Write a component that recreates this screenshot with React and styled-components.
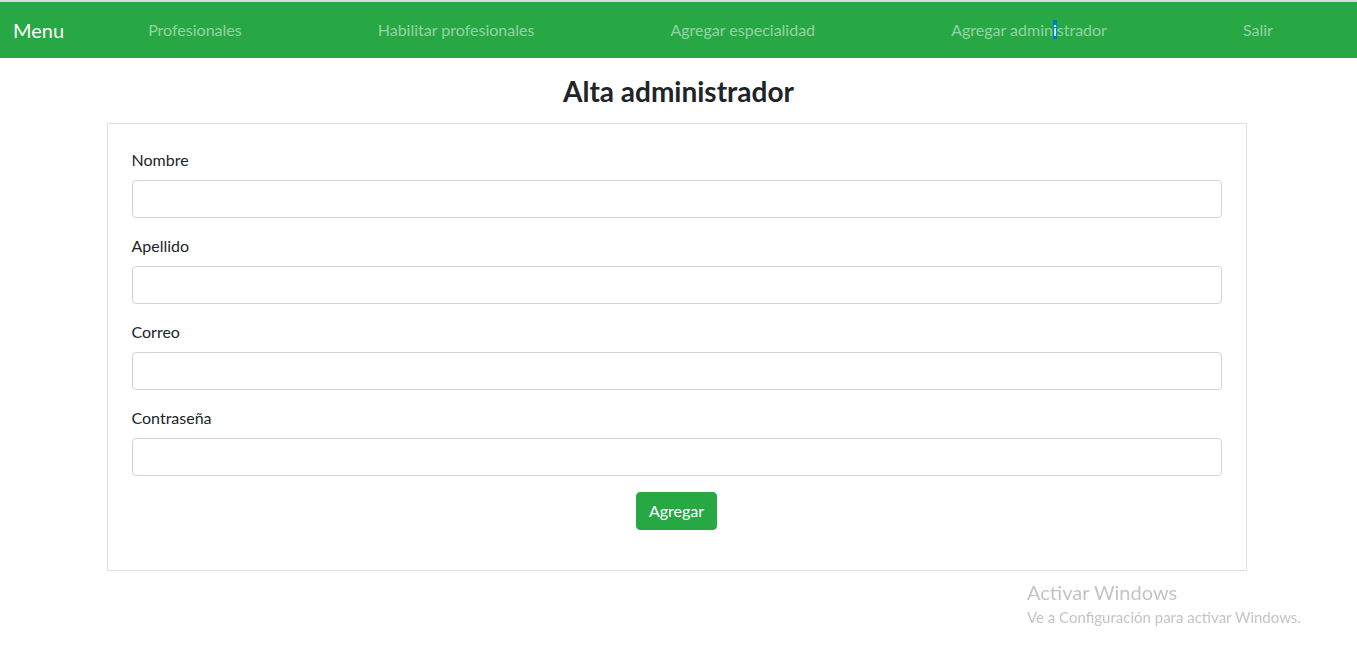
import React from 'react';
import styled, { createGlobalStyle } from 'styled-components';

const GlobalStyle = createGlobalStyle`
  * {
    box-sizing: border-box;
  }
  body {
    margin: 0;
    font-family: "Segoe UI", Lato, "Open Sans", sans-serif;
    font-size: 16px;
    line-height: 1.5;
    color: #212529;
    background: #fff;
    border-top: 2px solid #dcdcdc;
  }
`;

const Navbar = styled.nav`
  display: flex;
  align-items: center;
  height: 56px;
  padding: 0 16px 0 13px;
  background-color: #28a745;
`;

const Brand = styled.a`
  color: #fff;
  font-size: 20px;
  margin-right: 16px;
  text-decoration: none;
`;

const NavLinks = styled.div`
  flex: 1;
  display: flex;
  justify-content: space-around;
`;

const NavLink = styled.a`
  color: rgba(255, 255, 255, 0.5);
  text-decoration: none;
`;

const Selected = styled.span`
  background-color: #0078d7;
  color: #fff;
`;

const Title = styled.h3`
  margin: 17px 0 14px;
  text-align: center;
  font-size: 28px;
  font-weight: 700;
  line-height: 1.2;
`;

const Card = styled.form`
  width: 1140px;
  margin: 0 0 0 calc(50% - 572px);
  padding: 24px;
  border: 1px solid #dee2e6;
`;

const Group = styled.div`
  margin-bottom: 16px;
`;

const Label = styled.label`
  display: block;
  margin-bottom: 8px;
  font-weight: 400;
`;

const Input = styled.input`
  display: block;
  width: 100%;
  height: 38px;
  padding: 6px 12px;
  font: inherit;
  border: 1px solid #ced4da;
  border-radius: 4px;
`;

const Actions = styled.div`
  display: flex;
  justify-content: center;
  margin-bottom: 16px;
`;

const Button = styled.button`
  height: 38px;
  padding: 0 12px;
  font: inherit;
  color: #fff;
  background-color: #28a745;
  border: 1px solid #28a745;
  border-radius: 4px;
`;

const Watermark = styled.div`
  position: fixed;
  left: 1027px;
  top: 580px;
  color: #c4c4c4;
  line-height: 1.2;
`;

const WatermarkTitle = styled.div`
  font-size: 20px;
  margin-bottom: 4px;
`;

const WatermarkText = styled.div`
  font-size: 15px;
`;

const fields = ['Nombre', 'Apellido', 'Correo', 'Contraseña'];

export default function App() {
  return (
    <>
      <GlobalStyle />
      <Navbar>
        <Brand href="#">Menu</Brand>
        <NavLinks>
          <NavLink href="#">Profesionales</NavLink>
          <NavLink href="#">Habilitar profesionales</NavLink>
          <NavLink href="#">Agregar especialidad</NavLink>
          <NavLink href="#">Agregar admin<Selected>i</Selected>strador</NavLink>
          <NavLink href="#">Salir</NavLink>
        </NavLinks>
      </Navbar>
      <Title>Alta administrador</Title>
      <Card onSubmit={(e) => e.preventDefault()}>
        {fields.map((f) => (
          <Group key={f}>
            <Label>{f}</Label>
            <Input type={f === 'Contraseña' ? 'password' : 'text'} />
          </Group>
        ))}
        <Actions>
          <Button type="submit">Agregar</Button>
        </Actions>
      </Card>
      <Watermark>
        <WatermarkTitle>Activar Windows</WatermarkTitle>
        <WatermarkText>Ve a Configuración para activar Windows.</WatermarkText>
      </Watermark>
    </>
  );
}
